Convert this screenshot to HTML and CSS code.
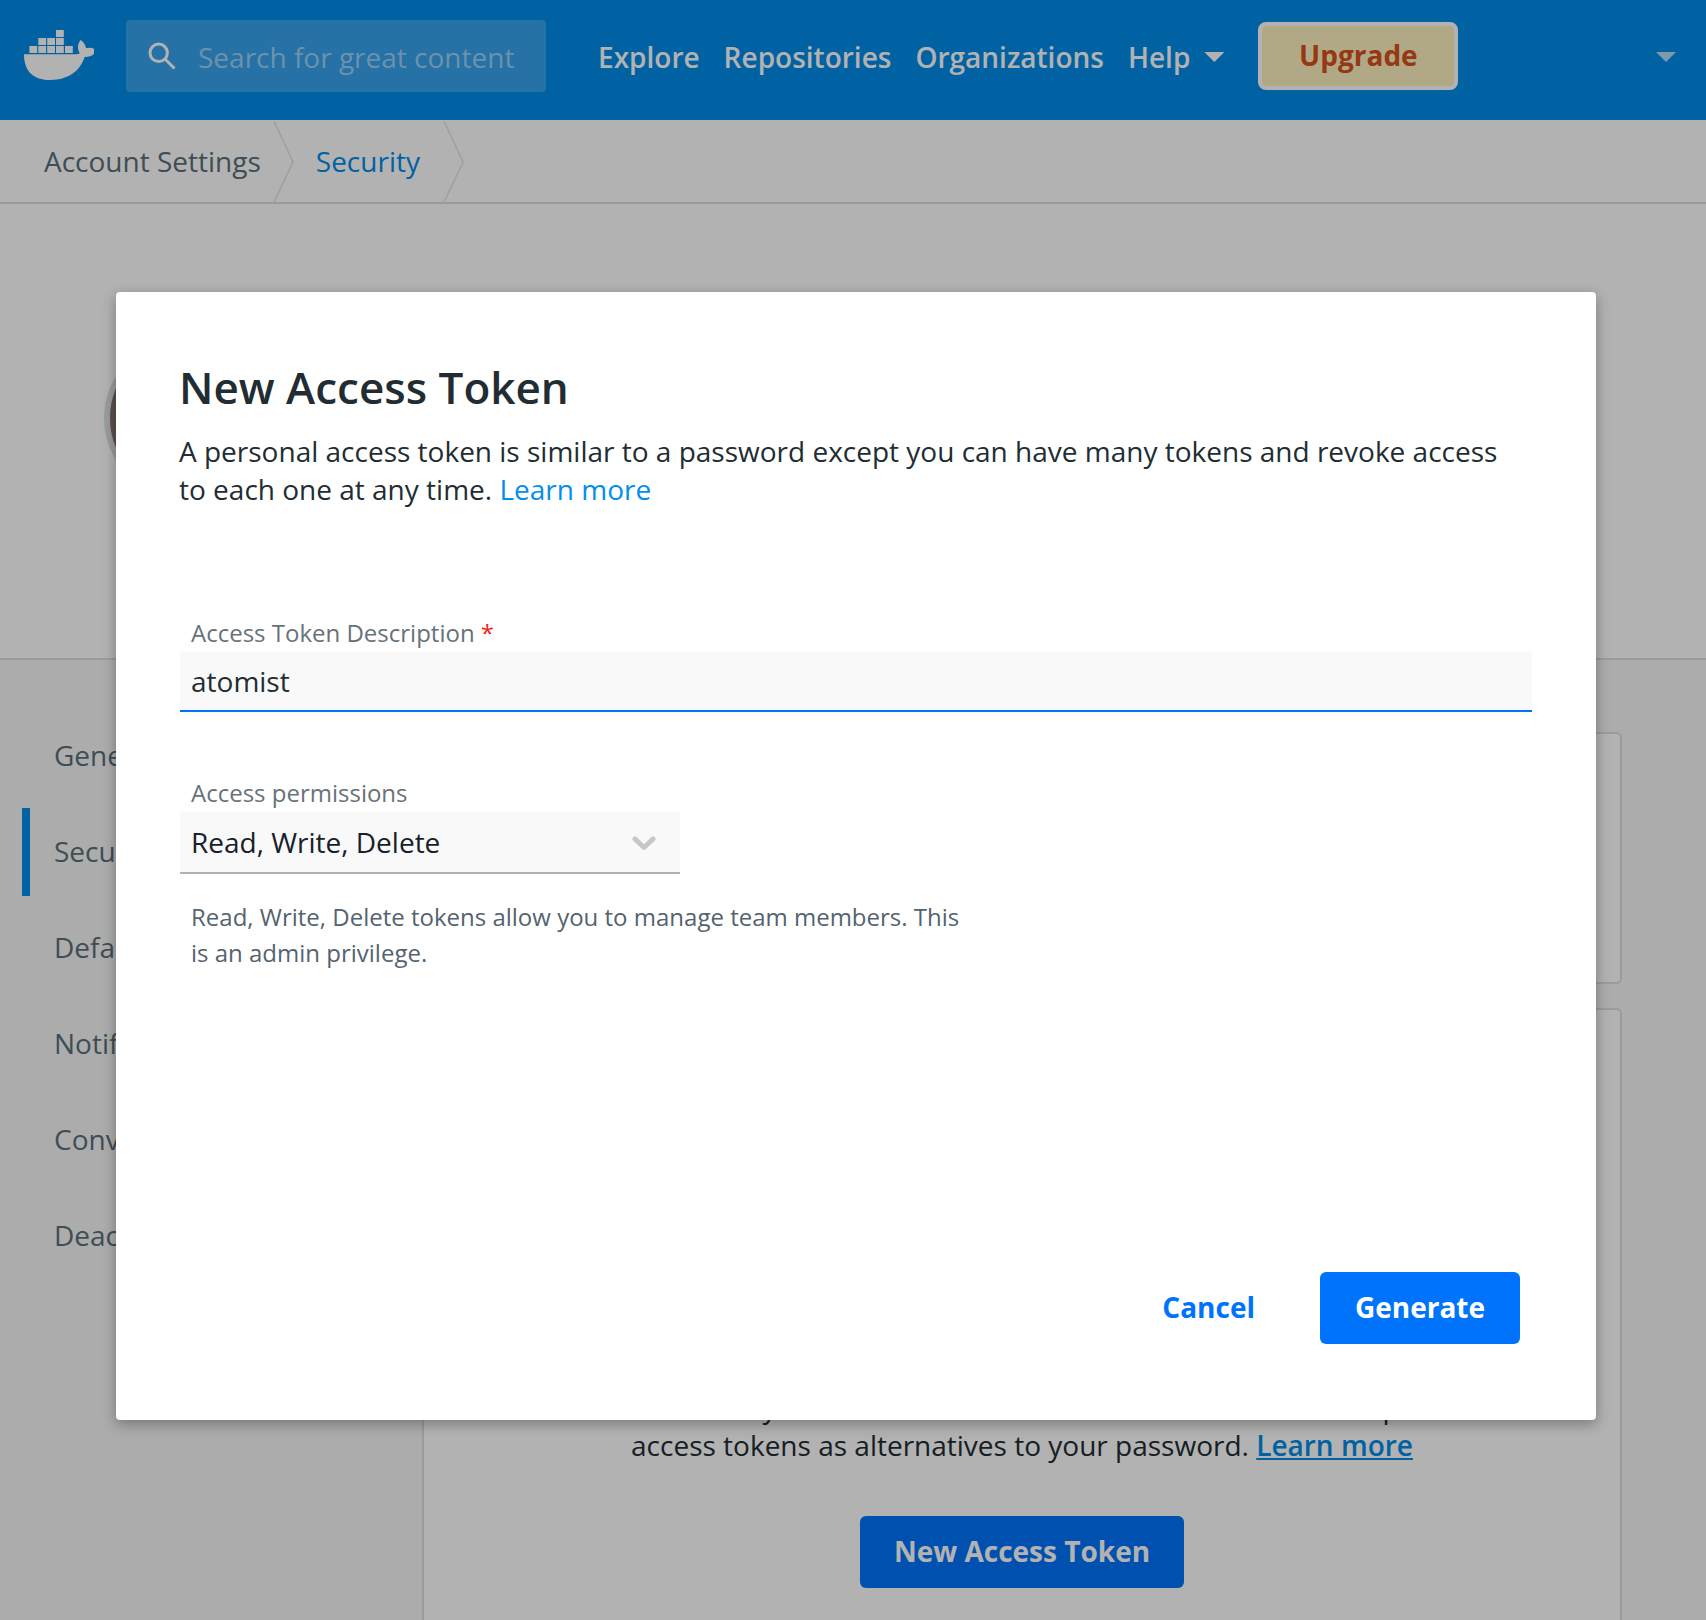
FILE: index.html
```html
<!DOCTYPE html>
<html lang="en">
<head>
<meta charset="utf-8">
<title>Security - Account Settings</title>
<link rel="stylesheet" href="styles.css">
</head>
<body>
<div class="page">
  <header class="topbar">
    <svg class="logo" viewBox="0 0 70 50" width="70" height="50">
      <path d="M32 0h7.8v7H32zM14.3 8h7.8v7h-7.8zM23.2 8H31v7h-7.8zM32 8h7.8v7H32zM5.4 16h7.8v7H5.4zM14.3 16h7.8v7h-7.8zM23.2 16H31v7h-7.8zM32 16h7.8v7H32zM41 16h7.8v7H41z"/>
      <path d="M0 24.2h52.500c1.600 0 2.600-.400 3.200-1.200-2.300-3.800-2.500-9 1-13 3 2 5 5 5.400 8.300 2.500-.900 5.700-.700 7.900.500v5c-2 2.200-5 3.300-9.400 3.300C56.500 40.500 44.500 50 26.500 50 9 50 0 41 0 24.200z"/>
    </svg>
    <div class="search">
      <svg class="search-icon" viewBox="0 0 28 28" width="28" height="28"><circle cx="10.700" cy="10.800" r="8.700" /><path d="M17 17l9.500 9.500"/></svg>
      <span>Search for great content</span>
    </div>
    <nav class="nav">
      <a>Explore</a><a>Repositories</a><a>Organizations</a><a class="help">Help<i class="caret"></i></a>
    </nav>
    <button class="upgrade">Upgrade</button>
    <i class="caret user-caret"></i>
  </header>
  <div class="crumbs">
    <a class="crumb">Account Settings</a>
    <svg class="crumb-sep" viewBox="0 0 22 82" width="22" height="82"><path d="M1 1l19 41L1 82"/></svg>
    <a class="crumb current">Security</a>
    <svg class="crumb-sep" viewBox="0 0 22 82" width="22" height="82"><path d="M1 1l19 41L1 82"/></svg>
  </div>
  <section class="profile"><div class="avatar"></div></section>
  <div class="content">
    <aside class="side">
      <a>General</a><a class="active">Security</a><a>Default</a><a>Notifications</a><a>Convert</a><a>Deactivate</a>
    </aside>
    <main class="cards">
      <section class="card card-small"></section>
      <section class="card card-tokens">
        <p>Docker Hub lets you create tokens to authenticate access. Treat personal<br>access tokens as alternatives to your password. <a>Learn more</a></p>
        <button class="primary new-token">New Access Token</button>
      </section>
    </main>
  </div>
</div>
<div class="scrim">
  <div class="modal">
    <h1>New Access Token</h1>
    <p class="intro">A personal access token is similar to a password except you can have many tokens and revoke access<br>to each one at any time. <a>Learn more</a></p>
    <div class="label">Access Token Description <span class="required">*</span></div>
    <div class="field">atomist</div>
    <div class="label label-perm">Access permissions</div>
    <div class="field select">
      <span>Read, Write, Delete</span>
      <svg viewBox="0 0 24 16" width="24" height="16"><path d="M3 4l9 8.500L21 4"/></svg>
    </div>
    <p class="hint">Read, Write, Delete tokens allow you to manage team members. This<br>is an admin privilege.</p>
    <div class="actions">
      <button class="cancel">Cancel</button>
      <button class="primary generate">Generate</button>
    </div>
  </div>
</div>
</body>
</html>
```
FILE: styles.css
```css
* { box-sizing: border-box; }
body {
  margin: 0;
  font-family: "Open Sans", "Noto Sans", sans-serif;
  font-size: 28px;
  line-height: 38px;
  color: #222d33;
  height: 1620px;
  overflow: hidden;
}
h1, p { margin: 0; }
button { font: inherit; font-weight: 700; border: 0; padding: 0 0 2px; white-space: nowrap; }
.page { height: 1620px; overflow: hidden; display: flex; flex-direction: column; background: #f6f6f6; }

.topbar {
  flex: none;
  height: 120px;
  background: #008de8;
  color: #fff;
  display: flex;
  align-items: flex-start;
  padding: 0 30px 0 24px;
}
.logo { margin-top: 30px; fill: #fff; flex: none; }
.search {
  margin: 20px 0 0 32px;
  width: 420px;
  height: 72px;
  border-radius: 4px;
  background: #37a3ec;
  display: flex;
  align-items: center;
  gap: 22px;
  padding: 2px 0 0 22px;
  color: #9bd1f5;
}
.search-icon { margin-top: -3px; fill: none; stroke: #fff; stroke-width: 3; }
.nav { display: flex; gap: 24px; margin: 38px 0 0 52px; font-weight: 600; }
.help { display: flex; align-items: center; }
.caret { width: 20px; height: 10px; background: #fff; clip-path: polygon(0 0, 100% 0, 50% 100%); margin: 0 0 0 14px; }
.upgrade {
  width: 200px;
  height: 68px;
  margin: 22px 0 0 34px;
  border: 4px solid #fff;
  border-radius: 8px;
  background: #fef3c0;
  color: #d6521f;
}
.user-caret { margin: 52px 0 0 auto; opacity: .7; }

.crumbs {
  flex: none;
  height: 84px;
  border-bottom: 2px solid #dbe0e4;
  background: #fff;
  display: flex;
  align-items: center;
  padding-left: 44px;
  color: #5b6f7a;
}
.crumb-sep { fill: none; stroke: #e6e6e6; stroke-width: 1.6; margin: 0 21px 0 12px; }
.current { color: #008de8; }
.current + .crumb-sep { margin-left: 23px; }
.profile { flex: none; height: 456px; background: #fff; border-bottom: 2px solid #dbe0e4; padding: 134px 104px; }
.avatar { width: 160px; height: 160px; border: 6px solid #dbe0e4; border-radius: 50%; background: #84716e; }

.content { display: flex; flex: 1; }
.side { width: 400px; margin: 52px 0 0 22px; color: #5b6f7a; }
.side a {
  display: flex;
  align-items: center;
  width: 130px;
  height: 88px;
  margin-bottom: 8px;
  padding: 0 0 2px 32px;
  overflow: hidden;
}
.side .active { border-left: 8px solid #008de8; padding-left: 24px; }
.cards { width: 1200px; padding-top: 72px; display: flex; flex-direction: column; gap: 24px; }
.card { background: #fff; border: 2px solid #dbe0e4; border-radius: 6px; }
.card-small { height: 252px; }
.card-tokens { height: 700px; padding-top: 378px; text-align: center; }
.card-tokens a { color: #008de8; font-weight: 600; text-decoration: underline; text-decoration-thickness: 2px; text-underline-offset: 2px; }
.primary { height: 72px; border-radius: 6px; background: #0073fc; color: #fff; }
.new-token { width: 324px; margin-top: 52px; }

.scrim {
  position: absolute;
  inset: 0;
  height: 1620px;
  padding: 292px 110px 0 116px;
  background: rgba(0, 0, 0, .3);
}
.modal {
  height: 1128px;
  background: #fff;
  border-radius: 4px;
  padding: 67px 64px 0 63px;
  box-shadow: 0 4px 14px rgba(0, 0, 0, .32);
}
h1 { font-size: 44px; line-height: 56px; font-weight: 600; }
.intro { margin-top: 17px; white-space: nowrap; }
.intro a { color: #008fec; }
.label { margin-top: 107px; padding-left: 12px; font-size: 24px; line-height: 36px; color: #677279; }
.required { color: #f0221a; }
.field {
  margin: 1px 0 0 1px;
  height: 60px;
  padding: 0 11px;
  background: #f9f9f9;
  border-bottom: 2px solid #0073fc;
  display: flex;
  align-items: center;
}
.label-perm { margin-top: 63px; }
.select {
  width: 500px;
  height: 62px;
  border-color: #acb4b9;
  color: #17212b;
  justify-content: space-between;
  padding-right: 24px;
}
.select svg { margin-top: 2px; fill: none; stroke: #c7c7c7; stroke-width: 5; stroke-linecap: round; stroke-linejoin: round; }
.hint { margin-top: 25px; padding-left: 12px; font-size: 24px; line-height: 36px; color: #556370; }
.actions { margin-top: 301px; padding-right: 12px; display: flex; justify-content: flex-end; gap: 65px; }
.cancel { background: none; color: #0073fc; }
.generate { width: 200px; }
```
